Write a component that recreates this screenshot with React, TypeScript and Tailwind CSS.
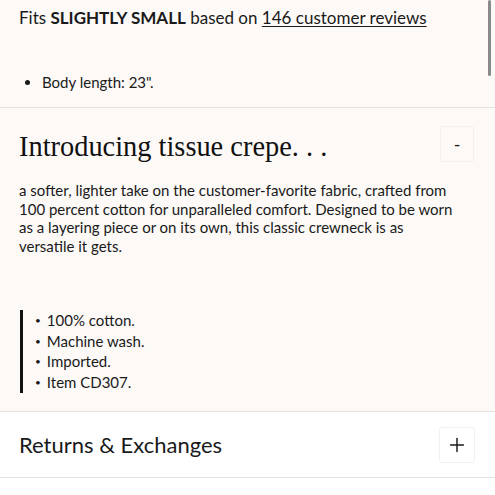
import { Plus } from "lucide-react";

const sans = { fontFamily: "Lato, 'Noto Sans', sans-serif" };

export default function App() {
  return (
    <div className="min-h-screen bg-white text-[#1a1a1a]" style={sans}>
      {/* Fit info */}
      <div className="bg-[#fcf9f7] border-b border-[#e4e2e0] h-[108px] px-[19px] relative">
        <p className="text-[17px] leading-[36px]">
          Fits <span className="font-bold">SLIGHTLY SMALL</span> based on{" "}
          <span className="underline underline-offset-2">146 customer reviews</span>
        </p>
        <ul className="mt-[36px] ml-[12px] list-disc pl-[11px] text-[15px] leading-[20px]">
          <li>Body length: 23".</li>
        </ul>
        <div className="absolute right-[4px] top-0 w-[3px] h-[76px] bg-[#8a8a8a] rounded-full" />
      </div>

      {/* Description */}
      <div className="bg-[#fcf9f7] border-b border-[#e4e2e0] h-[304px] px-[19px]">
        <div className="flex items-start justify-between pt-[19px]">
          <h2 className="text-[28.4px] leading-[40px] text-[#111]" style={{ fontFamily: "'Liberation Serif', serif" }}>
            Introducing tissue crepe. . .
          </h2>
          <button className="w-[34px] h-[36px] mt-[-1px] mr-[2px] rounded-[3px] border border-[#f1eeeb] bg-[#fcf9f7] flex items-center justify-center text-[18px] leading-none">
            -
          </button>
        </div>
        <p className="mt-[14px] text-[15px] leading-[18.5px] pr-[20px]">
          a softer, lighter take on the customer-favorite fabric, crafted from 100 percent cotton for unparalleled comfort.
          Designed to be worn as a layering piece or on its own, this classic crewneck is as versatile it gets.
        </p>
        <ul className="mt-[55px] ml-px border-l-[3px] border-[#111] pl-[12px] text-[15px] leading-[20.7px]">
          <li className="flex items-center gap-[6px]"><span className="text-[10px]">•</span>100% cotton.</li>
          <li className="flex items-center gap-[6px]"><span className="text-[10px]">•</span>Machine wash.</li>
          <li className="flex items-center gap-[6px]"><span className="text-[10px]">•</span>Imported.</li>
          <li className="flex items-center gap-[6px]"><span className="text-[10px]">•</span>Item CD307.</li>
        </ul>
      </div>

      {/* Returns */}
      <div className="bg-white border-b border-[#e4e2e0] h-[66px] px-[19px] flex items-center justify-between">
        <span className="text-[22px]">Returns &amp; Exchanges</span>
        <button className="w-[36px] h-[36px] mr-[1px] rounded-[3px] border border-[#f0f0f0] bg-white flex items-center justify-center">
          <Plus size={22} strokeWidth={1.6} />
        </button>
      </div>
    </div>
  );
}
